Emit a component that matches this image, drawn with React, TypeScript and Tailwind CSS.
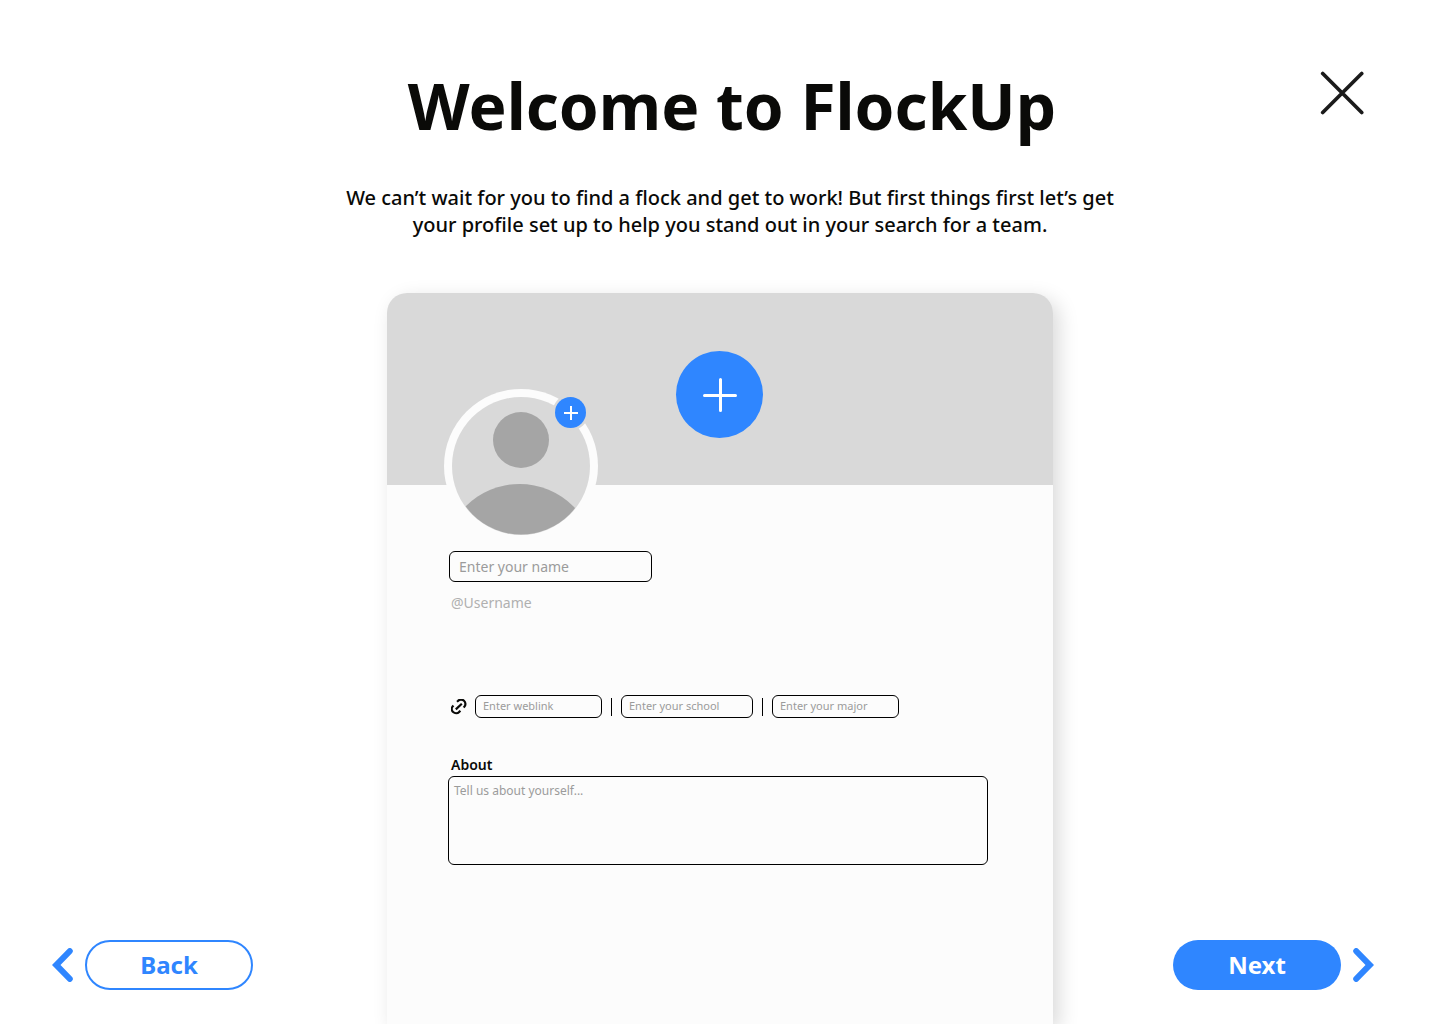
import React from "react";

const detailField =
  "h-[23px] rounded-md border border-black bg-transparent px-[7px] pb-0.5 text-[11px] leading-4 text-black outline-none placeholder:text-[#9b9b9b] placeholder:opacity-100";

function Avatar() {
  return (
    <div className="relative -mt-24 size-[154px]">
      <svg viewBox="0 0 154 154" className="block size-full" role="img" aria-label="Profile picture">
        <defs>
          <clipPath id="face">
            <circle cx="77" cy="77" r="68.5" />
          </clipPath>
        </defs>
        <circle cx="77" cy="77" r="77" fill="#fcfcfc" />
        <circle cx="77" cy="77" r="69" fill="#d9d9d9" />
        <circle cx="77" cy="51" r="28" fill="#a5a5a5" />
        <ellipse cx="75.5" cy="171" rx="76" ry="76" fill="#a5a5a5" clipPath="url(#face)" />
        <circle cx="126.5" cy="23.5" r="18" fill="#d9d9d9" />
      </svg>
      <button
        type="button"
        aria-label="Add profile picture"
        className="absolute top-2 left-[111px] flex size-[31px] items-center justify-center rounded-full bg-[#2f86ff]"
      >
        <svg viewBox="0 0 31 31" className="size-full" fill="none" stroke="#fff" strokeWidth="2" aria-hidden="true">
          <path d="M9 16h14M16 9v14" />
        </svg>
      </button>
    </div>
  );
}

function LinkIcon() {
  return (
    <svg viewBox="0 0 16 16" className="mr-2 size-4 shrink-0" fill="none" stroke="#0a0a08" strokeWidth="2.2" aria-hidden="true">
      <path d="M4.800 10.400l6-5.600" />
      <path d="M6 2.800l.9-.8a4.100 4.100 0 0 1 6.400 5.800l-.7.700" />
      <path d="M2.400 6.500l-.4.500a4.100 4.100 0 0 0 6.200 5.900l1.200-1.100" />
    </svg>
  );
}

function Divider() {
  return <span aria-hidden="true" className="mx-[9px] h-[18px] w-px shrink-0 bg-black" />;
}

function Chevron({ flip = false }: { flip?: boolean }) {
  return (
    <svg viewBox="0 0 22 34" className={flip ? "h-[34px] w-[22px] shrink-0 -scale-x-100" : "h-[34px] w-[22px] shrink-0"} aria-hidden="true">
      <path d="M15.700 1a2.900 2.900 0 0 1 4.200 4.200L8.500 17l11.400 11.800a2.900 2.900 0 0 1-4.200 4.200L0 17z" fill="#2f86ff" />
    </svg>
  );
}

export default function App() {
  return (
    <div className="flex min-h-screen flex-col overflow-x-hidden bg-white font-['Noto_Sans',sans-serif] text-[#0a0a08]">
      <header className="grid grid-cols-[1fr_auto_1fr] items-start pt-[71px] pr-[76px] pl-[100px]">
        <h1 className="col-start-2 text-center text-[64px] leading-[70px] font-bold">Welcome to FlockUp</h1>
        <button type="button" aria-label="Close" className="size-11 justify-self-end">
          <svg viewBox="0 0 44 44" className="size-full" fill="none" stroke="#1b1b1b" strokeWidth="3.7" strokeLinecap="round" aria-hidden="true">
            <path d="M2.700 2.500l39 39M41.700 2.500l-39 39" />
          </svg>
        </button>
      </header>
      <p className="mt-[43px] pl-5 text-center text-xl leading-[27px] font-medium">
        We can’t wait for you to find a flock and get to work! But first things first let’s get
        <br />
        your profile set up to help you stand out in your search for a team.
      </p>

      <main className="mt-[55px] grid grow grid-cols-[1fr_minmax(0,666px)_1fr]">
        <div className="flex items-center gap-[11px] self-end pb-[34px] pl-[52px]">
          <Chevron />
          <button type="button" className="h-[50px] w-[168px] rounded-full border-2 border-[#2f86ff] text-2xl font-bold text-[#2f86ff]">
            Back
          </button>
        </div>

        <form className="rounded-t-[20px] bg-[#fcfcfc] shadow-[6px_6px_20px_rgba(0,0,0,0.15)]">
          <div className="flex h-48 items-center justify-center rounded-t-[20px] bg-[#d9d9d9] pt-[11px] pr-0.5">
            <button type="button" aria-label="Add cover photo" className="size-[87px] rounded-full bg-[#2f86ff]">
              <svg viewBox="0 0 87 87" className="size-full" fill="none" stroke="#fff" strokeWidth="3" strokeLinecap="round" aria-hidden="true">
                <path d="M28.500 44.500h31M44.500 28.500v31" />
              </svg>
            </button>
          </div>

          <div className="pr-[61px] pl-[57px]">
            <Avatar />
            <div className="px-1 pt-2">
              <input
                type="text"
                aria-label="Name"
                placeholder="Enter your name"
                className="ml-px block h-[31px] w-[203px] rounded-md border border-black bg-transparent px-[9px] text-sm outline-none placeholder:text-[#9b9b9b] placeholder:opacity-100"
              />
              <p className="mt-[11px] pl-[3px] text-sm leading-5 text-[#b0b0b0]">@Username</p>

              <div className="mt-[82px] flex items-center pl-[3px]">
                <LinkIcon />
                <input type="url" aria-label="Weblink" placeholder="Enter weblink" className={`w-[127px] ${detailField}`} />
                <Divider />
                <input type="text" aria-label="School" placeholder="Enter your school" className={`w-[132px] ${detailField}`} />
                <Divider />
                <input type="text" aria-label="Major" placeholder="Enter your major" className={`w-[127px] ${detailField}`} />
              </div>

              <label htmlFor="about" className="mt-9 block pl-[3px] text-sm leading-[22px] font-semibold">
                About
              </label>
              <textarea
                id="about"
                placeholder="Tell us about yourself..."
                className="block h-[89px] w-full resize-none rounded-md border border-black bg-transparent px-[5px] py-[5px] text-xs leading-[18px] outline-none placeholder:text-[#9b9b9b] placeholder:opacity-100"
              />
            </div>
          </div>
        </form>

        <div className="flex items-center justify-end gap-[11px] self-end pr-[66px] pb-[34px]">
          <button type="button" className="h-[50px] w-[168px] rounded-full bg-[#2f86ff] text-2xl font-bold text-white">
            Next
          </button>
          <Chevron flip />
        </div>
      </main>
    </div>
  );
}
